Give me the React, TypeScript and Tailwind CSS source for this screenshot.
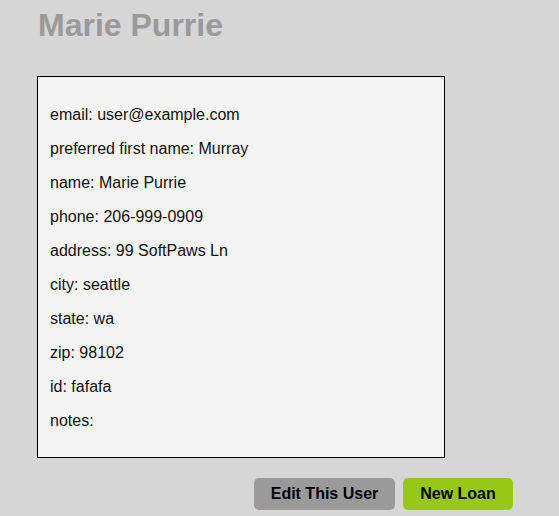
const fields: [string, string][] = [
  ["email", "user@example.com"],
  ["preferred first name", "Murray"],
  ["name", "Marie Purrie"],
  ["phone", "206-999-0909"],
  ["address", "99 SoftPaws Ln"],
  ["city", "seattle"],
  ["state", "wa"],
  ["zip", "98102"],
  ["id", "fafafa"],
  ["notes", ""],
];

const App = () => {
  return (
    <div
      className="min-h-[516px] w-full bg-[#d6d6d6] pl-[37px] pt-[7px]"
      style={{ fontFamily: '"Liberation Sans", Arial, sans-serif' }}
    >
      <h1 className="pl-[1px] text-[32px] font-bold leading-[36px] text-[#9a9a9a]">
        Marie Purrie
      </h1>
      <div className="mt-[33px] flex w-[408px] flex-col gap-4 border border-black bg-[#f4f4f4] pb-[27px] pl-[12px] pt-[29px]">
        {fields.map(([label, value]) => (
          <p key={label} className="text-[16px] leading-[18px] text-[#111]">
            {label}: {value}
          </p>
        ))}
      </div>
      <div className="mt-[20px] flex w-[476px] justify-end gap-2">
        <button className="h-[32px] w-[141px] rounded-[5px] bg-[#9a9a9a] text-[16px] font-bold text-black">
          Edit This User
        </button>
        <button className="h-[32px] w-[110px] rounded-[5px] bg-[#96c815] text-[16px] font-bold text-black">
          New Loan
        </button>
      </div>
    </div>
  );
};

export default App;
